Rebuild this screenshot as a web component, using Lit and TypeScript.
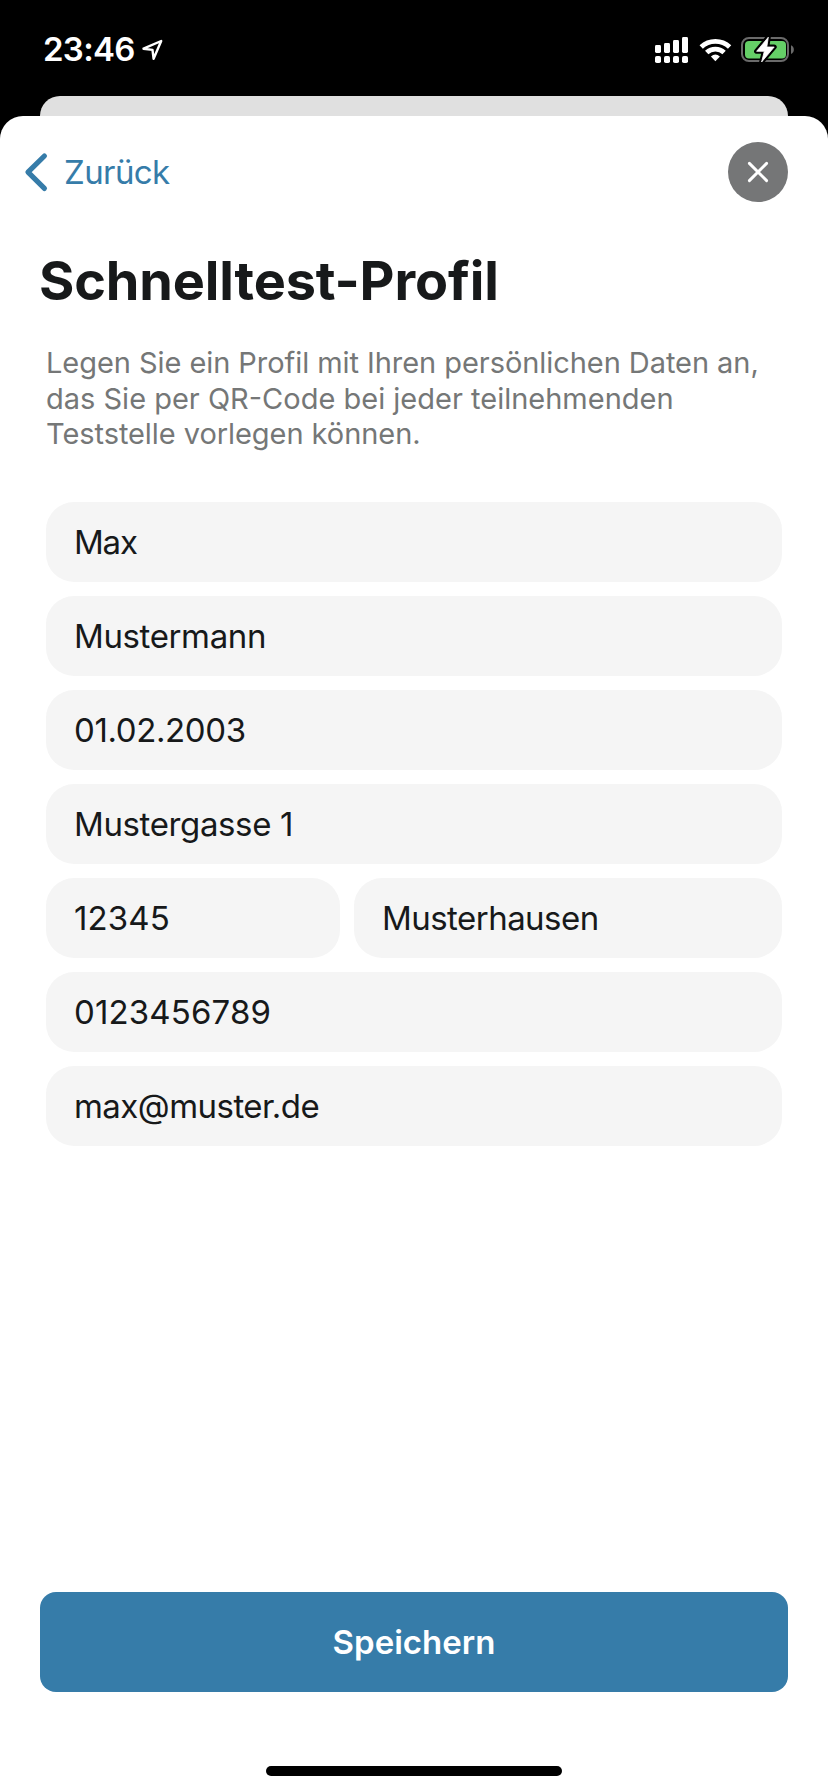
import { LitElement, html, css } from "lit";
import { customElement, property } from "lit/decorators.js";

@customElement("status-bar")
class StatusBar extends LitElement {
  static styles = css`
    :host {
      display: flex;
      justify-content: space-between;
      align-items: flex-start;
      height: 96px;
      box-sizing: border-box;
      padding: 29px 32px 0 43px;
      color: #fff;
      font: 560 33px/40px Inter, sans-serif;
    }
    .left, .right { display: flex; height: 40px; }
    .time { letter-spacing: -0.7px; width: 96px; white-space: nowrap; }
    svg { display: block; flex: none; }
  `;
  render() {
    return html`
      <div class="left">
        <span class="time">23:46</span>
        <svg width="30" height="40" viewBox="139 29 30 40">
          <path d="M143.5 48.7 161.2 41 153.6 58.8 152.5 49.9Z" fill="none" stroke="#fff" stroke-width="2.4" stroke-linejoin="round" />
        </svg>
      </div>
      <div class="right">
        <svg width="146" height="40" viewBox="650 29 146 40">
          <g fill="#fff">
            <rect x="655" y="45" width="6" height="8" rx="1.4" />
            <rect x="664" y="43" width="6" height="10" rx="1.4" />
            <rect x="673" y="40" width="6" height="13" rx="1.4" />
            <rect x="682" y="37" width="6" height="16" rx="1.4" />
            <rect x="655" y="56" width="6" height="7" rx="1.8" />
            <rect x="664" y="56" width="6" height="7" rx="1.8" />
            <rect x="673" y="56" width="6" height="7" rx="1.8" />
            <rect x="682" y="56" width="6" height="7" rx="1.8" />
            <path d="M715.4 61.2 710.9 56.6Q715.4 52.4 719.9 56.6Z" />
          </g>
          <g fill="none" stroke="#fff" stroke-width="4.8">
            <path d="M701.2 47A20.6 20.6 0 0 1 729.6 47" />
            <path d="M706.7 52.6A12.6 12.6 0 0 1 724.1 52.6" />
          </g>
          <rect x="742" y="38" width="46" height="23" rx="7" fill="none" stroke="#6a6a6a" stroke-width="2" />
          <rect x="745" y="41" width="41" height="17.5" rx="4" fill="#65cf67" />
          <path d="M791 45.2C794.8 46.5 794.8 52.7 791 54Z" fill="#6a6a6a" />
          <path d="M768.3 37.2 756.6 51.3H764.3L761.6 62 774.2 47H766.8Z" fill="#fff" stroke="#000" stroke-width="5" stroke-linejoin="round" />
          <path d="M768.3 37.2 756.6 51.3H764.3L761.6 62 774.2 47H766.8Z" fill="#fff" stroke="#fff" stroke-width="0.8" stroke-linejoin="round" />
        </svg>
      </div>
    `;
  }
}

@customElement("profile-field")
class ProfileField extends LitElement {
  @property() value = "";
  static styles = css`
    :host {
      display: block;
      box-sizing: border-box;
      height: 80px;
      padding-left: 28px;
      border-radius: 28px;
      background: #f5f5f5;
      color: #17191a;
      font: 400 33px/80px Inter, sans-serif;
      white-space: nowrap;
    }
  `;
  render() {
    return html`${this.value}`;
  }
}

@customElement("app-root")
class AppRoot extends LitElement {
  static styles = css`
    :host {
      display: flex;
      flex-direction: column;
      height: 1792px;
      background: #000;
      font-family: Inter, sans-serif;
    }
    .behind {
      height: 20px;
      margin: 0 40px;
      border-radius: 20px 20px 0 0;
      background: #e0e0e0;
      flex: none;
    }
    .sheet {
      flex: 1;
      display: flex;
      flex-direction: column;
      box-sizing: border-box;
      padding: 26px 40px 16px;
      border-radius: 23px 23px 0 0;
      background: #fff;
    }
    .nav { display: flex; justify-content: space-between; align-items: center; height: 60px; }
    .back {
      display: flex;
      align-items: center;
      gap: 14px;
      margin-left: -16px;
      color: #367ca9;
      font-size: 33px;
      line-height: 40px;
      letter-spacing: -0.6px;
    }
    .close { display: flex; }
    svg { display: block; }
    h1 {
      margin: 47px 0 0 -1px;
      color: #17191a;
      font-size: 54px;
      line-height: 64px;
      font-weight: 700;
      letter-spacing: -0.15px;
    }
    .intro {
      margin: 32px 0 0 6px;
      color: #757777;
      font-size: 29px;
      line-height: 35.5px;
      letter-spacing: -0.06px;
      white-space: nowrap;
    }
    .wide { letter-spacing: 0; }
    .form { display: flex; flex-direction: column; gap: 14px; margin: 50.5px 6px 0; }
    .row { display: grid; grid-template-columns: 294px 1fr; gap: 14px; }
    .word { letter-spacing: -0.38px; }
    .short { letter-spacing: -1.2px; }
    .long { letter-spacing: -0.54px; }
    .digits { letter-spacing: 0.14px; }
    .save {
      margin-top: auto;
      height: 100px;
      border-radius: 16px;
      background: #367ca9;
      color: #fff;
      font-size: 33px;
      line-height: 100px;
      font-weight: 560;
      letter-spacing: 0;
      text-align: center;
    }
    .home { width: 296px; height: 10px; margin: 74px auto 0; border-radius: 5px; background: #000; }
  `;
  render() {
    return html`
      <status-bar></status-bar>
      <div class="behind"></div>
      <main class="sheet">
        <div class="nav">
          <div class="back">
            <svg width="26" height="42" viewBox="25 151 26 42">
              <path d="M45.4 156 29 172.2 45.4 188.4" fill="none" stroke="#367ca9" stroke-width="5.2" stroke-linecap="round" stroke-linejoin="round" />
            </svg>
            <span>Zurück</span>
          </div>
          <div class="close">
            <svg width="60" height="60" viewBox="0 0 60 60">
              <circle cx="30" cy="30" r="30" fill="#757677" />
              <path d="M21.4 21.4 38.6 38.6M38.6 21.4 21.4 38.6" stroke="#fff" stroke-width="2.9" stroke-linecap="round" />
            </svg>
          </div>
        </div>
        <h1>Schnelltest-Profil</h1>
        <p class="intro">
          Legen Sie ein Profil mit Ihren persönlichen Daten an,<br /><span class="wide">das Sie per QR-Code bei jeder teilnehmenden</span><br />Teststelle vorlegen können.
        </p>
        <div class="form">
          <profile-field class="short" value="Max"></profile-field>
          <profile-field class="word" value="Mustermann"></profile-field>
          <profile-field class="word" value="01.02.2003"></profile-field>
          <profile-field class="word" value="Mustergasse 1"></profile-field>
          <div class="row">
            <profile-field class="digits" value="12345"></profile-field>
            <profile-field class="long" value="Musterhausen"></profile-field>
          </div>
          <profile-field class="digits" value="0123456789"></profile-field>
          <profile-field class="long" value="max@muster.de"></profile-field>
        </div>
        <div class="save">Speichern</div>
        <div class="home"></div>
      </main>
    `;
  }
}
